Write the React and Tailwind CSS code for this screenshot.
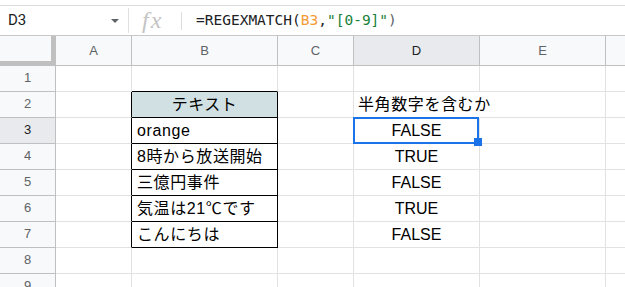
import React from "react";

const COLS = [
  { key: "A", w: "w-[76px]" },
  { key: "B", w: "w-[146px]" },
  { key: "C", w: "w-[76px]" },
  { key: "D", w: "w-[126px]" },
  { key: "E", w: "w-[126px]" },
];

const rows = [
  { n: 1 },
  { n: 2, B: "テキスト", D: "半角数字を含むか" },
  { n: 3, B: "orange", D: "FALSE" },
  { n: 4, B: "8時から放送開始", D: "TRUE" },
  { n: 5, B: "三億円事件", D: "FALSE" },
  { n: 6, B: "気温は21℃です", D: "TRUE" },
  { n: 7, B: "こんにちは", D: "FALSE" },
  { n: 8 },
  { n: 9 },
];

function Cell({ col, row }) {
  const n = row.n;
  const inTable = n >= 2 && n <= 7;
  let border = "border-r border-b border-[#e2e2e2]";
  let extra = "";
  let content = null;

  if (col === "A") {
    border = inTable
      ? "border-r border-b border-r-black border-b-[#e2e2e2]"
      : "border-r border-b border-[#e2e2e2]";
  }
  if (col === "B") {
    if (n === 1) border = "border-r border-b border-r-[#e2e2e2] border-b-black";
    else if (inTable) border = "border-r border-b border-black";
    if (n === 2) {
      extra = "bg-[#d0e0e3] justify-center";
      content = <span className="tracking-[0.5px]">{row.B}</span>;
    } else if (inTable) {
      extra = "pl-[5px]";
      content = <span className="tracking-[0.6px]">{row.B}</span>;
    }
  }
  if (col === "D") {
    if (n === 2) {
      border = "border-r border-b border-r-transparent border-b-[#e2e2e2]";
      extra = "pl-[4px] overflow-visible";
      content = (
        <span className="whitespace-nowrap tracking-[0.6px]">{row.D}</span>
      );
    } else if (row.D) {
      extra = "justify-center";
      content = <span>{row.D}</span>;
    }
  }
  const w = COLS.find((c) => c.key === col).w;
  const selected = col === "D" && n === 3;
  return (
    <div
      className={`${w} shrink-0 h-[26px] flex items-center leading-[25px] ${
        selected ? "relative z-10" : ""
      } ${border} ${extra}`}
    >
      {content}
      {selected && (
        <>
          <div className="absolute left-[-1px] top-[-1px] right-0 bottom-[-1px] border-2 border-[#1a73e8]" />
          <div className="absolute right-[-3px] bottom-[-3px] w-[8px] h-[8px] bg-[#1a73e8]" />
        </>
      )}
    </div>
  );
}

export default function App() {
  return (
    <div className="w-[625px] h-[287px] overflow-hidden bg-white text-black font-['Liberation_Sans','Noto_Sans_CJK_JP',sans-serif]">
      <div className="h-[5px]" />
      {/* formula bar */}
      <div className="flex h-[31px] border-t border-b border-t-[#dadce0] border-b-[#c7c7c7]">
        <div className="w-[128px] flex items-center justify-between pl-[8px] pr-[9px]">
          <span className="text-[15px] text-[#202124] font-['Roboto',sans-serif]">D3</span>
          <svg width="8" height="4" viewBox="0 0 8 4">
            <path d="M0 0 L8 0 L4 4 Z" fill="#5f6368" />
          </svg>
        </div>
        <div className="w-px h-[25px] self-center bg-[#e0e0e0]" />
        <div className="w-[52px] flex items-center pl-[13px]">
          <span className="font-['Liberation_Serif',serif] italic text-[24px] leading-none tracking-[2px] text-[#c4c4c4] -mt-[2px]">
            fx
          </span>
        </div>
        <div className="w-px h-[18px] self-center bg-[#dadce0]" />
        <div className="flex items-center pl-[14px] font-['DejaVu_Sans_Mono',monospace] text-[14.5px] text-[#202124] whitespace-nowrap">
          <span>=REGEXMATCH(</span>
          <span className="text-[#f29b34]">B3</span>
          <span>,</span>
          <span className="text-[#188038]">"[0-9]"</span>
          <span className="text-[#5f6368]">)</span>
        </div>
      </div>

      {/* column header */}
      <div className="flex h-[30px] text-[13px] text-[#5f6368]">
        <div className="w-[56px] shrink-0 h-[30px] bg-[#f8f9fa] border-r-[5px] border-b-[5px] border-[#c0c0c0]" />
        {COLS.map((c) => (
          <div
            key={c.key}
            className={`${c.w} shrink-0 h-[30px] flex items-center justify-center border-r border-b border-[#c0c0c0] ${
              c.key === "D" ? "bg-[#e8eaed] text-[#202124]" : "bg-[#f8f9fa]"
            }`}
          >
            {c.key}
          </div>
        ))}
        <div className="flex-1 h-[30px] bg-[#f8f9fa] border-b border-[#c0c0c0]" />
      </div>

      {/* rows */}
      {rows.map((r) => (
        <div key={r.n} className="flex text-[16px]">
          <div
            className={`w-[56px] shrink-0 h-[26px] flex items-center justify-center pb-[2px] text-[13px] border-r border-b border-[#c0c0c0] ${
              r.n === 3 ? "bg-[#e8eaed] text-[#202124]" : "bg-[#f8f9fa] text-[#5f6368]"
            }`}
          >
            {r.n}
          </div>
          {COLS.map((c) => (
            <Cell key={c.key} col={c.key} row={r} />
          ))}
          <div className="flex-1 h-[26px] border-b border-[#e2e2e2]" />
        </div>
      ))}
    </div>
  );
}
